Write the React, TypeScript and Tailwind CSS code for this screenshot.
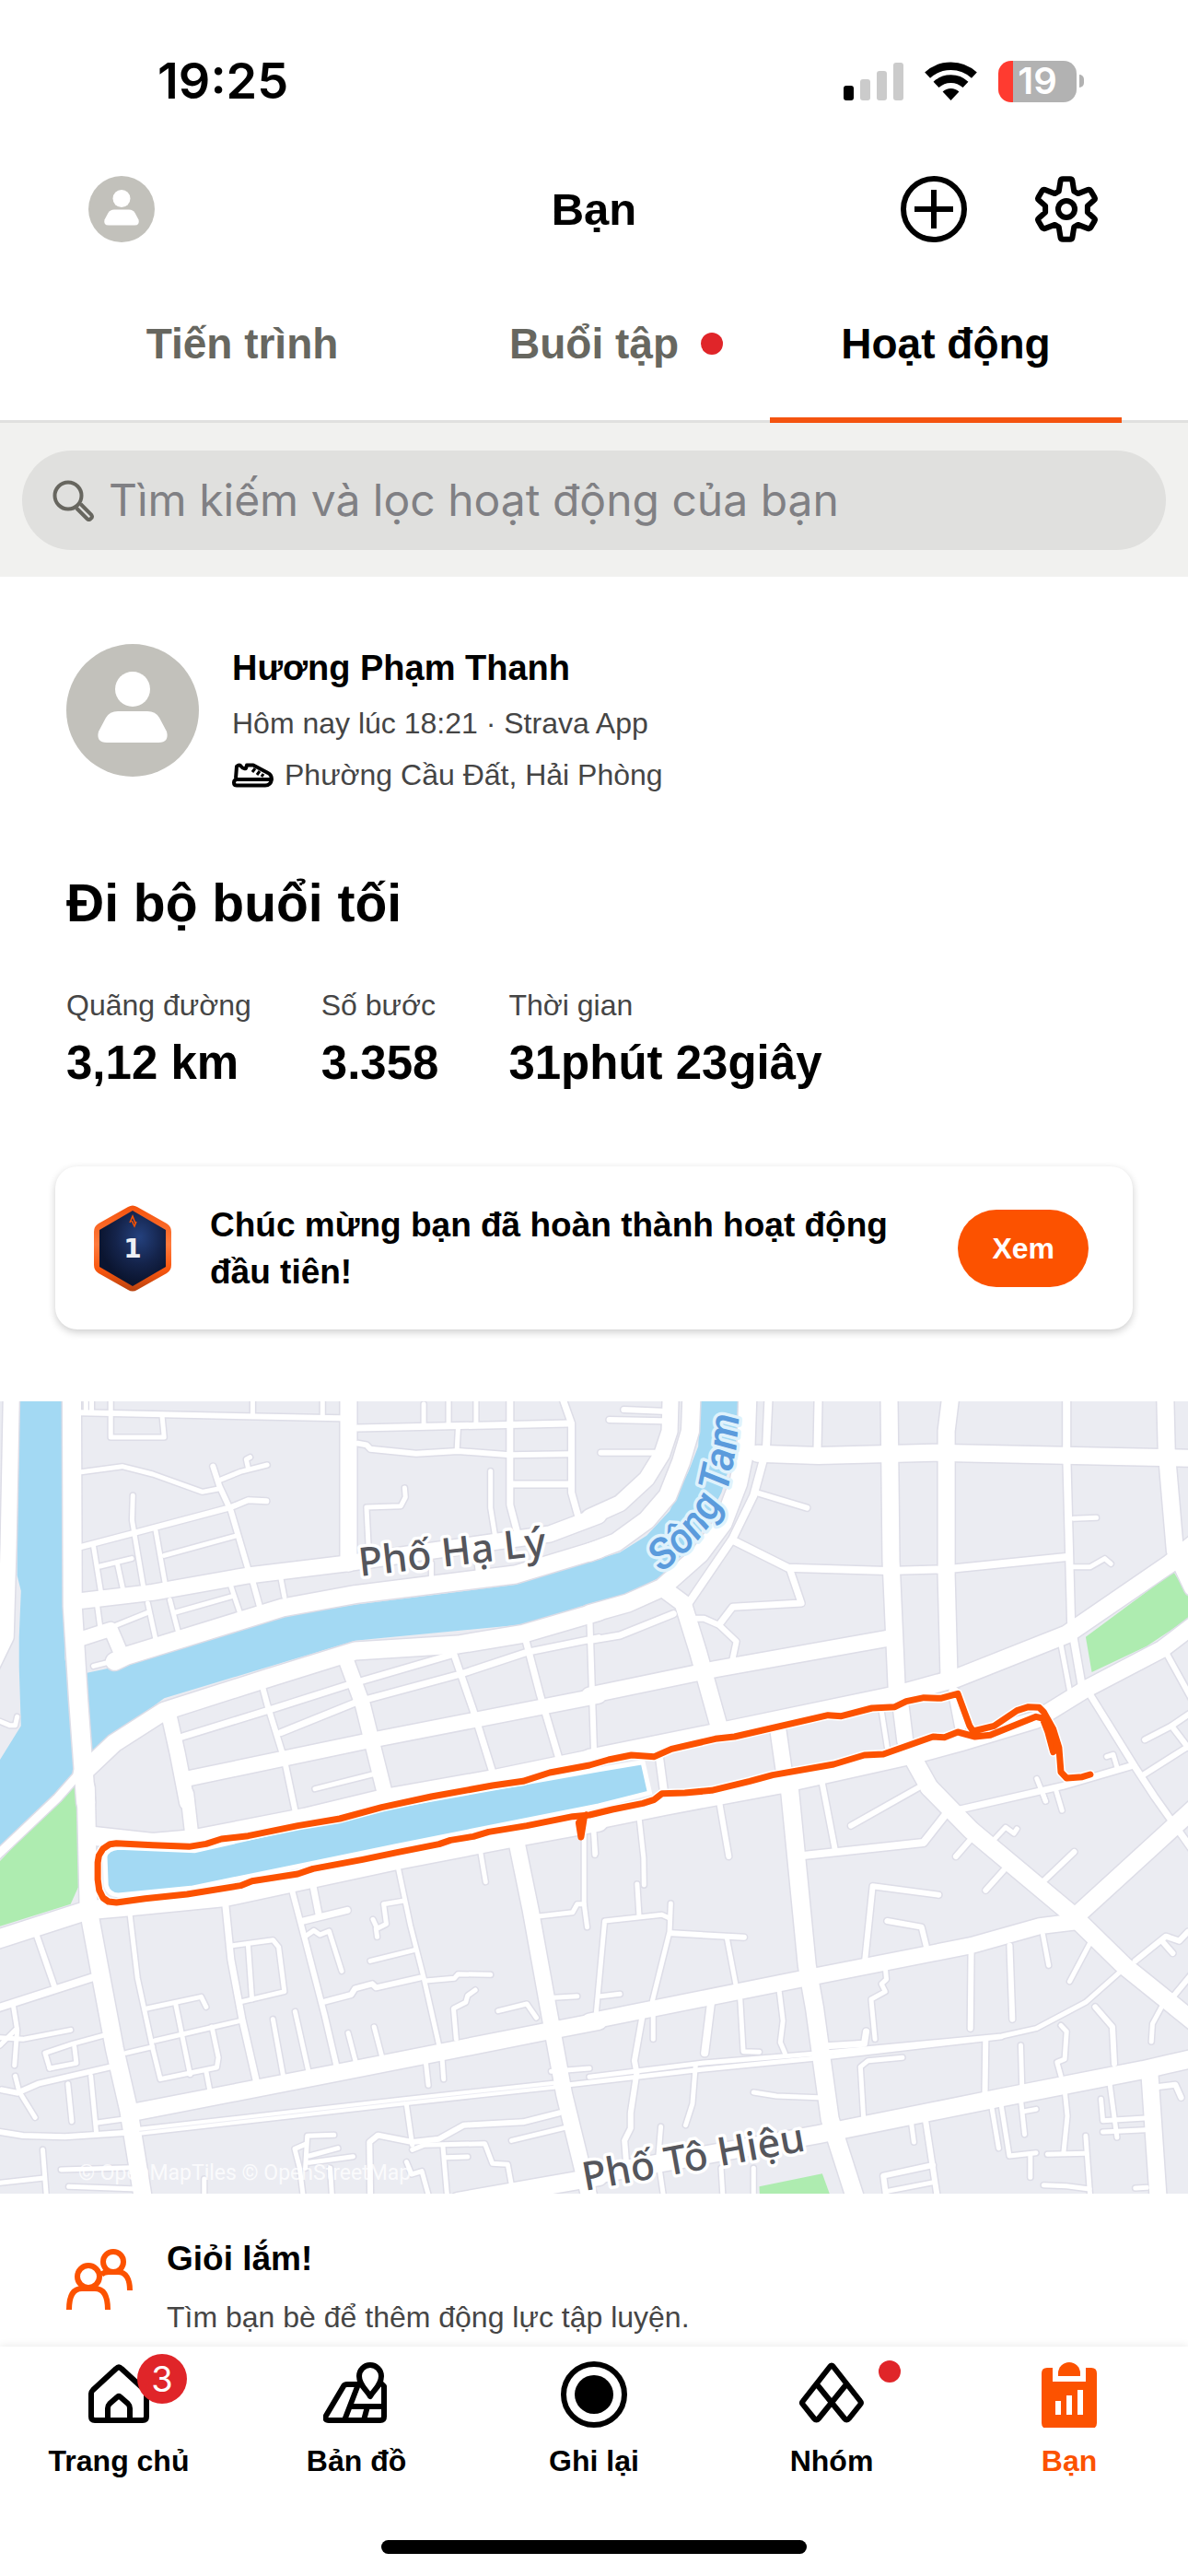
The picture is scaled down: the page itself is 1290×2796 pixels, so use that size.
import type { ReactNode } from "react";

type Road = [number, string];
type Sheet = { x: number; y: number; roads: Road[] };

const ACTIVE = "text-[#fc5200]";

// Street network, split into four survey sheets. Each entry is [width, points].
const sheets: Sheet[] = [
  {
    x: 0,
    y: 0,
    roads: [
      [20, "188,0 190,700 205,1000 222,1290 225,1340"],
      [17, "30,0 22,500 15,800 -20,890"],
      [5, "0,1075 25,1088 40,1088 45,1060"],
      [19, "300,880 330,862 740,705 930,662 1350,597 1568,515"],
      [17, "215,682 400,655 650,600 900,562 1100,525 1440,465 1568,405"],
      [18, "913,0 913,560"],
      [6, "212,70 890,88"],
      [5, "225,0 225,70"],
      [5, "240,0 240,70"],
      [5, "290,0 290,150 430,150 425,85"],
      [5, "662,0 662,75"],
      [5, "845,0 845,80"],
      [7, "937,120 1490,105"],
      [6, "937,170 960,175 970,188 1090,203 1200,195 1335,208 1490,205"],
      [5, "1110,42 1110,110"],
      [5, "1175,0 1175,108"],
      [5, "1247,0 1247,105"],
      [5, "1200,120 1197,190"],
      [7, "1336,0 1336,370 1355,460"],
      [7, "1467,0 1497,105 1497,330 1515,410"],
      [7, "1345,303 1490,303"],
      [5, "1285,260 1285,380 1298,480"],
      [5, "1060,315 1062,345 1050,374 960,378 965,500"],
      [5, "212,263 320,245 400,270 530,328 572,318"],
      [6, "558,245 575,310 605,390 650,580"],
      [5, "575,290 630,262 700,240"],
      [5, "650,250 645,222 655,215"],
      [6, "212,507 350,462 605,378 650,355 698,358"],
      [5, "348,340 346,420 376,640"],
      [5, "408,455 433,630"],
      [5, "430,535 615,472"],
      [5, "245,505 265,660"],
      [5, "262,570 345,545"],
      [5, "308,565 322,645"],
      [5, "255,700 262,765"],
      [15, "215,805 290,775 322,868"],
      [5, "305,762 385,722"],
      [5, "387,690 408,810"],
      [5, "445,680 468,790"],
      [5, "460,720 608,668"],
      [5, "605,635 628,720"],
      [6, "660,610 680,700"],
      [5, "735,605 745,670"],
      [5, "245,895 310,875"],
      [5, "1130,560 1130,610"],
      [5, "1250,560 1253,595"],
      [19, "215,1245 300,1145 430,1042 700,935 930,846 1200,825 1370,790 1568,718"],
      [16, "440,1040 465,1180 490,1340"],
      [16, "905,870 950,1020 1010,1320"],
      [16, "490,1262 970,1137 1568,992"],
      [6, "685,950 700,1020 745,1200 773,1365"],
      [7, "470,1128 700,1040 910,957 1150,870 1185,857"],
      [7, "735,1112 935,1012 1210,920 1380,850 1568,803"],
      [7, "1190,860 1240,1040 1290,1240"],
      [7, "1375,800 1415,990 1465,1200"],
      [6, "1545,750 1556,1170"],
      [5, "825,1295 975,1248"],
      [20, "240,1448 400,1470 510,1458 800,1388 1000,1328 1300,1262 1568,1193"],
      [9, "225,1220 150,1325 0,1502 -30,1540"],
    ],
  },
  {
    x: 1544,
    y: 0,
    roads: [
      [19, "0,525 70,492 150,420 205,340 240,230 264,130 268,0"],
      [17, "0,410 80,365 150,285 190,205 210,130 213,0"],
      [6, "90,60 190,65"],
      [6, "52,93 190,97"],
      [6, "30,200 175,200"],
      [19, "0,725 100,690 190,640 290,530 350,430 390,300 410,180 415,0"],
      [8, "470,0 463,190 430,340 375,480 260,690"],
      [18, "785,0 790,550 805,970"],
      [18, "948,0 935,130 935,600 942,930"],
      [18, "440,203 600,210 900,200 1568,218"],
      [8, "600,0 597,190"],
      [8, "1250,0 1250,200 1262,760 1290,960"],
      [18, "1508,0 1512,200 1534,520 1580,640"],
      [6, "445,333 570,380"],
      [8, "375,485 520,575 780,585 935,580 1250,540"],
      [7, "525,580 555,690 375,703 340,760"],
      [6, "270,740 300,740 340,762 385,815 372,890"],
      [5, "1268,415 1328,412"],
      [5, "1265,572 1312,572 1350,545 1366,562"],
      [18, "190,640 245,690 285,850 340,1095"],
      [7, "0,812 80,795 220,725"],
      [17, "0,990 330,905 780,805"],
      [19, "0,1195 330,1112 800,990 960,935 1250,792 1520,562 1600,480"],
      [5, "1235,825 1258,975"],
      [18, "500,1282 850,1185 970,1145 1170,1070 1300,970 1500,840 1600,745"],
      [5, "765,1040 780,1160"],
      [17, "815,1020 827,1140"],
      [12, "955,980 972,1090"],
      [17, "495,1110 510,1240"],
      [8, "183,1190 196,1310"],
      [19, "845,1190 890,1290"],
      [7, "1310,985 1430,1225 1480,1320 1600,1530"],
      [6, "1510,850 1590,1030"],
      [6, "1455,1135 1525,1090 1590,1035"],
      [6, "1525,1090 1568,1160"],
      [6, "1450,1250 1590,1140"],
      [5, "1355,1190 1372,1183 1382,1225"],
      [5, "1172,1262 1195,1335"],
    ],
  },
  {
    x: 0,
    y: 1290,
    roads: [
      [20, "-20,500 230,400 320,390 590,357 1040,237 1340,165 1568,113"],
      [19, "225,0 232,400 262,600 300,850 337,1050 375,1340"],
      [14, "490,20 502,150"],
      [5, "340,410 360,620 400,850 420,950 568,912 572,880 555,780"],
      [5, "385,720 527,682 540,715"],
      [5, "460,705 498,935"],
      [5, "330,865 400,845"],
      [5, "405,825 630,760"],
      [5, "540,925 550,990"],
      [7, "590,375 605,560 635,760 672,960"],
      [5, "610,515 715,497 730,520 745,665 635,697"],
      [5, "650,515 660,690"],
      [5, "715,755 742,940"],
      [5, "773,730 808,925"],
      [6, "765,335 800,500 850,740 882,910"],
      [7, "820,320 835,415"],
      [7, "795,435 910,400"],
      [5, "800,485 822,466 838,480 862,468 895,598"],
      [5, "1043,262 1075,450 1110,620 1150,840"],
      [5, "1055,370 1005,380 1012,445 988,460 977,430"],
      [5, "985,460 988,487"],
      [5, "970,565 1085,530"],
      [6, "850,698 920,675 930,655 975,640 985,652 1100,620"],
      [5, "1115,630 1190,622 1200,608 1285,610"],
      [5, "1195,820 1188,720 1220,700 1225,678 1245,660"],
      [5, "1305,728 1380,705 1405,750"],
      [5, "912,800 932,895"],
      [5, "980,780 1000,875"],
      [5, "1258,205 1272,308"],
      [17, "1352,170 1390,400 1438,730 1478,1000 1545,1340"],
      [18, "350,1058 880,930 1430,795 1568,762"],
      [9, "365,1120 1060,1022 1450,970"],
      [5, "1410,420 1500,407 1512,380 1530,380"],
      [5, "1530,150 1530,380 1538,455"],
      [5, "1555,130 1560,215"],
      [5, "1450,685 1512,680"],
      [8, "-10,720 245,618"],
      [6, "97,485 143,650"],
      [5, "35,712 45,790 38,905"],
      [5, "0,840 40,790"],
      [5, "0,815 60,820 185,790"],
      [5, "130,915 118,865 190,835 270,808"],
      [5, "195,845 200,898 130,915"],
      [6, "5,985 45,995 100,965 290,910"],
      [5, "40,940 50,990 92,1075"],
      [5, "178,965 188,1088"],
      [5, "238,940 252,1120"],
      [5, "255,1092 325,1080"],
      [6, "-10,1120 60,1134 170,1138 325,1125"],
      [5, "112,1180 122,1340"],
      [5, "0,1288 115,1272"],
      [5, "160,1245 345,1238"],
      [5, "180,1300 360,1308"],
      [5, "535,1275 535,1340"],
      [5, "1115,890 1122,970"],
      [5, "1158,880 1162,950"],
      [5, "1065,1035 1080,1165"],
      [6, "970,1322 968,1155 990,1133 1080,1155 1150,1145 1215,1100 1370,1090 1465,1060"],
      [5, "1340,1150 1480,1108"],
      [5, "1080,1180 1110,1165 1270,1160 1290,1225 1330,1228 1342,1310"],
      [5, "1160,1165 1165,1240 1172,1340"],
      [5, "1165,1205 1225,1203"],
      [5, "875,1132 805,1135 800,1240"],
      [5, "800,1162 772,1177 785,1240 795,1340"],
      [5, "810,1200 885,1175"],
      [5, "810,1222 925,1202"],
      [5, "1065,1220 1078,1260 1105,1250 1125,1340"],
      [5, "865,1240 870,1340"],
      [19, "1200,1348 1568,1268"],
    ],
  },
  {
    x: 1544,
    y: 1290,
    roads: [
      [18, "0,112 200,62 500,-8"],
      [19, "524,0 570,580 590,720 630,1080 697,1340"],
      [17, "0,762 550,625 1000,515 1180,452 1270,438"],
      [19, "890,0 1000,140 1260,410 1400,580 1600,780"],
      [19, "1265,430 1600,50"],
      [5, "0,943 300,897 600,866 1080,810 1170,785 1300,700 1400,590"],
      [5, "-100,975 300,918 600,881 1080,812"],
      [5, "-100,925 0,915"],
      [6, "340,45 365,225"],
      [5, "130,95 142,230 143,318"],
      [5, "125,315 130,415"],
      [5, "10,120 14,220"],
      [5, "18,730 40,435 190,415 208,425"],
      [5, "213,378 210,470 165,695"],
      [6, "215,475 405,488"],
      [5, "360,490 383,640"],
      [5, "30,680 80,673"],
      [6, "138,750 118,890 124,930 108,1060 108,1110 92,1150 97,1230"],
      [5, "167,745 167,820"],
      [8, "318,705 302,865"],
      [5, "395,690 403,860 445,862"],
      [5, "497,660 507,760 500,830 512,865"],
      [5, "278,905 270,1030 252,1100"],
      [5, "430,993 490,1005 600,1010"],
      [6, "608,-25 643,200"],
      [6, "685,125 880,-12"],
      [8, "560,222 875,180 932,90"],
      [6, "722,560 742,322 915,350"],
      [6, "780,435 870,455 882,515"],
      [7, "960,75 1240,-5 1420,-70"],
      [5, "1185,10 1195,45"],
      [5, "1220,0 1238,75"],
      [6, "960,225 995,175"],
      [5, "1060,170 1090,130 1112,150 1120,135"],
      [6, "1038,335 1085,270"],
      [6, "1190,305 1270,210"],
      [5, "775,585 778,625 765,640 775,665 738,690 748,820"],
      [5, "718,1075 710,910 730,890 820,880"],
      [7, "620,842 720,835 725,795"],
      [6, "1000,540 998,785"],
      [6, "1101,515 1108,755"],
      [5, "1188,480 1203,580"],
      [5, "1310,510 1258,632"],
      [6, "1430,565 1510,485 1545,500 1568,470"],
      [6, "1503,505 1528,540"],
      [6, "1530,680 1590,590"],
      [5, "1500,712 1475,770 1472,828"],
      [6, "1325,715 1370,780 1375,900"],
      [5, "1235,775 1250,795 1245,885 1225,895 1235,940"],
      [5, "1130,840 1133,970"],
      [6, "1038,820 1036,995"],
      [19, "0,1265 600,1130 1080,1010 1450,920 1590,880"],
      [18, "1467,920 1490,1340"],
      [6, "1490,975 1535,968 1550,1010"],
      [5, "1362,955 1382,1140"],
      [5, "1340,1015 1345,1085 1455,1077"],
      [5, "1345,1122 1455,1115"],
      [5, "1245,985 1252,1070 1242,1190"],
      [5, "1200,1195 1300,1192"],
      [5, "1300,1135 1312,1340"],
      [5, "1130,1015 1140,1130"],
      [5, "1140,1055 1170,1048"],
      [5, "1078,1030 1100,1200 1170,1190"],
      [5, "1155,1195 1155,1270"],
      [5, "1053,1035 1072,1175"],
      [5, "843,1090 850,1155"],
      [6, "880,1080 912,1340"],
      [6, "900,1230 770,1265 778,1340"],
      [5, "780,1315 905,1285"],
      [5, "1190,1295 1250,1298 1310,1308"],
      [5, "1430,1305 1460,1303"],
      [5, "187,1105 180,1210 195,1340"],
      [5, "345,1240 350,1340"],
      [5, "430,1240 430,1340"],
    ],
  },
];

const water = [
  "45,0 170,0 170,870 215,1235 215,1290 0,1510 0,1200 55,1090 50,900 50,800 55,650 45,600",
  "225,918 330,890 730,735 930,695 1350,630 1544,556 1624,525 1694,470 1754,390 1804,260 1829,180 1836,0 1938,0 1927,180 1890,330 1824,490 1724,610 1644,660 1544,692 1370,760 930,812 430,1000 240,1175",
];

const canal =
  "M275 1515 Q280 1490 310 1486 L510 1496 L1000 1358 L1568 1232 L1684 1208 L1702 1308 L1568 1350 L1040 1480 L800 1542 L500 1618 L310 1641 Q285 1640 278 1610 Z";

const parks = [
  "205,1260 205,1615 185,1670 0,1742 0,1530",
  "3074,588 3120,680 3120,735 3004,830 2860,915 2844,800",
  "1989,2590 2154,2548 2175,2620 1990,2620",
];

const route =
  "2856,1248 2835,1256 2794,1260 2779,1240 2774,1160 2759,1100 2734,1045 2722,1030 2694,1028 2664,1040 2604,1090 2549,1107 2540,1090 2509,985 2464,1000 2420,998 2374,1010 2344,1028 2284,1032 2204,1058 2169,1055 1924,1125 1874,1132 1759,1165 1714,1190 1654,1185 1594,1200 1544,1218 1440,1242 1370,1270 1290,1284 1130,1320 1000,1355 890,1392 780,1415 650,1448 580,1458 540,1474 495,1483 400,1478 305,1472 288,1475 270,1490 259,1512 256,1535 256,1590 260,1625 270,1650 284,1662 305,1665 380,1652 490,1638 630,1610 660,1595 780,1572 820,1555 950,1525 1040,1502 1150,1475 1180,1462 1240,1450 1280,1435 1380,1415 1500,1385 1544,1380 1604,1362 1684,1342 1714,1330 1734,1310 1794,1308 1864,1300 1964,1270 2024,1250 2184,1215 2264,1185 2314,1182 2444,1125 2474,1127 2509,1110 2554,1125 2594,1120 2714,1060 2731,1065 2745,1110 2759,1175";

const RoadLayer = ({ color, grow }: { color: string; grow: number }) => (
  <g fill="none" stroke={color} strokeLinecap="round" strokeLinejoin="round">
    {sheets.map((sheet) => (
      <g key={`${sheet.x}-${sheet.y}`} transform={`translate(${sheet.x} ${sheet.y})`}>
        {sheet.roads.map(([width, points]) => (
          <polyline
            key={points}
            points={points}
            strokeWidth={width + grow}
            vectorEffect="non-scaling-stroke"
          />
        ))}
      </g>
    ))}
  </g>
);

const RouteMap = () => (
  <div className="relative aspect-[3/2] w-full overflow-hidden bg-[#ebecf2]">
    <svg
      className="h-full w-full"
      viewBox="0 33 3112 2580"
      preserveAspectRatio="none"
      role="img"
      aria-label="Bản đồ lộ trình"
    >
      {water.map((points) => (
        <polygon key={points} points={points} fill="#a3d9f3" />
      ))}
      {parks.map((points) => (
        <polygon key={points} points={points} fill="#aeecb0" />
      ))}
      <RoadLayer color="#dddde7" grow={3} />
      <RoadLayer color="#ffffff" grow={0} />
      <path
        d="M365 2410 L1060 2312 L1450 2260"
        fill="none"
        stroke="#ececf3"
        strokeWidth="1"
        vectorEffect="non-scaling-stroke"
      />
      <path
        d={canal}
        fill="#a3d9f3"
        stroke="#fff"
        strokeWidth="5"
        vectorEffect="non-scaling-stroke"
      />
      <g fill="none" strokeLinecap="round" strokeLinejoin="round">
        <g stroke="#fff" strokeWidth="10">
          <polyline points={route} vectorEffect="non-scaling-stroke" />
        </g>
        <g stroke="#fc5200" strokeWidth="7">
          <polyline points={route} vectorEffect="non-scaling-stroke" />
          <polyline
            points="1536,1380 1516,1405 1522,1452 1530,1390"
            vectorEffect="non-scaling-stroke"
          />
          <polyline
            points="2738,1075 2752,1090 2764,1130 2768,1165"
            vectorEffect="non-scaling-stroke"
          />
        </g>
      </g>
    </svg>
    <svg className="absolute inset-0 h-full w-full" viewBox="0 0 1290 860" aria-hidden="true">
      <defs>
        <path id="river-line" d="M718 186 C754 160 784 126 792 88 C800 52 803 30 803 -30" />
      </defs>
      <g
        className="font-['Noto_Sans',sans-serif] font-medium"
        fontSize="43"
        paintOrder="stroke"
        stroke="#fff"
        strokeWidth="7"
        strokeLinejoin="round"
      >
        <text fill="#55565c" transform="translate(391 190) rotate(-6.5)">
          Phố Hạ Lý
        </text>
        <text fill="#55565c" transform="translate(635 857) rotate(-10.3)">
          Phố Tô Hiệu
        </text>
        <text
          className="font-['Roboto',sans-serif]"
          fontSize="46"
          fill="#5b9bdc"
          stroke="#dff2fc"
          fontStyle="italic"
        >
          <textPath href="#river-line">Sông Tam</textPath>
        </text>
      </g>
      <text
        x="85"
        y="845"
        fontSize="23"
        fill="#fff"
        fillOpacity="0.8"
        className="font-['Roboto',sans-serif]"
      >
        © OpenMapTiles © OpenStreetMap
      </text>
    </svg>
  </div>
);

const Avatar = ({ className }: { className: string }) => (
  <svg className={className} viewBox="0 0 144 144" aria-hidden="true">
    <circle cx="72" cy="72" r="72" fill="#c2c1bb" />
    <circle cx="72" cy="49" r="19" fill="#fff" />
    <path
      d="M56 73H88Q97 73 101 80L109 95Q112 107 100 107H44Q32 107 35 95L43 80Q47 73 56 73Z"
      fill="#fff"
    />
  </svg>
);

const StatusBar = () => (
  <div className="flex h-44 items-center justify-between pl-[171px] pr-[113px]">
    <span className="font-['Inter',sans-serif] text-[54px] leading-none font-semibold">19:25</span>
    <div className="flex items-center gap-[23px]">
      <svg className="h-[41px] w-[65px]" viewBox="0 0 65 41" aria-hidden="true">
        <rect x="0" y="25" width="11" height="16" rx="3" />
        <rect x="18" y="18" width="11" height="23" rx="3" fill="#cbcbcb" />
        <rect x="36" y="9" width="11" height="32" rx="3" fill="#cbcbcb" />
        <rect x="54" y="0" width="11" height="41" rx="3" fill="#cbcbcb" />
      </svg>
      <svg className="h-[42px] w-[57px]" viewBox="0 0 57 42" aria-hidden="true">
        <g fill="none" stroke="#000" strokeWidth="8.6">
          <path d="M3.1 14.7A37.3 37.3 0 0 1 53.9 14.7" />
          <path d="M12.5 24.9A23.4 23.4 0 0 1 44.5 24.9" />
        </g>
        <path d="M28.5 42L19.6 32.5A13 13 0 0 1 37.4 32.5Z" />
      </svg>
      <div className="flex items-center gap-[3px]">
        <div className="flex h-[45px] w-[85px] items-center justify-center rounded-[14px] bg-[linear-gradient(90deg,#ff3b30_16px,#b2b2b2_16px)] font-['Inter',sans-serif] text-[40px] leading-none font-semibold text-white">
          19
        </div>
        <div className="h-[14px] w-[5px] rounded-r-full bg-[#b2b2b2]" />
      </div>
    </div>
  </div>
);

const Header = () => (
  <header className="grid h-[102px] grid-cols-[1fr_auto_1fr] items-center px-24">
    <button type="button" aria-label="Hồ sơ" className="justify-self-start">
      <Avatar className="size-[72px]" />
    </button>
    <h1 className="text-[49px] leading-none font-bold">Bạn</h1>
    <div className="flex gap-18 justify-self-end">
      <button type="button" aria-label="Thêm">
        <svg className="size-[72px]" viewBox="0 0 72 72" fill="none" stroke="#000" strokeWidth="6">
          <circle cx="36" cy="36" r="33" />
          <path d="M36 15V57M15 36H57" />
        </svg>
      </button>
      <button type="button" aria-label="Cài đặt">
        <svg
          className="size-[72px]"
          viewBox="0 0 72 72"
          fill="none"
          stroke="#000"
          strokeWidth="6"
          strokeLinejoin="round"
        >
          <path d="M27.7 16.7L29.6 5Q30 3.3 32 3.3H40Q42 3.3 42.4 5L44.3 16.7L48.6 19.1L59.6 14.9Q61.5 14.4 62.5 16.2L66.6 23.3Q67.5 25 66 26.2L58.9 32.5V39.5L66 45.8Q67.5 47 66.6 48.7L62.5 55.8Q61.5 57.6 59.6 57.1L48.6 52.9L44.3 55.3L42.4 67Q42 68.7 40 68.7H32Q30 68.7 29.6 67L27.7 55.3L23.4 52.9L12.4 57.1Q10.5 57.6 9.5 55.8L5.4 48.7Q4.5 47 6 45.8L13.1 39.5V32.5L6 26.2Q4.5 25 5.4 23.3L9.5 16.2Q10.5 14.4 12.4 14.9L23.4 19.1Z" />
          <circle cx="36" cy="36" r="9" />
        </svg>
      </button>
    </div>
  </header>
);

const Tabs = () => (
  <nav className="grid h-[181px] grid-cols-3 border-b-[3px] border-[#e0e0df] px-18 text-[46px] leading-[56px] font-bold text-[#676760]">
    <a href="#progress" className="flex items-center justify-center pt-3">
      Tiến trình
    </a>
    <a href="#workouts" className="flex items-center justify-center pt-3">
      <span className="relative">
        Buổi tập
        <span className="absolute top-4 left-full ml-6 size-6 rounded-full bg-[#e02529]" />
      </span>
    </a>
    <a
      href="#activities"
      aria-current="page"
      className="-mb-[3px] flex items-center justify-center border-b-6 border-[#f4530f] pt-3.5 text-black"
    >
      Hoạt động
    </a>
  </nav>
);

const Search = () => (
  <div className="bg-[#f1f1ef] px-6 pt-[30px] pb-[29px]">
    <label className="flex h-[108px] items-center gap-4 rounded-[54px] bg-[#e0e0de] pl-[33px]">
      <svg
        className="size-[45px] shrink-0"
        viewBox="0 0 45 45"
        fill="none"
        stroke="#67665f"
        strokeWidth="4"
        aria-hidden="true"
      >
        <circle cx="17" cy="17" r="14.5" />
        <path d="M26 30.500L37.500 42Q39.500 44 41.500 42Q44 40 42 37.500L30.500 26" />
      </svg>
      <input
        type="search"
        aria-label="Tìm kiếm"
        placeholder="Tìm kiếm và lọc hoạt động của bạn"
        className="min-w-0 flex-1 bg-transparent font-['Inter',sans-serif] text-[48px] leading-[60px] outline-none placeholder:text-[#808084]"
      />
    </label>
  </div>
);

const stats = [
  { label: "Quãng đường", value: "3,12 km" },
  { label: "Số bước", value: "3.358" },
  { label: "Thời gian", value: "31phút 23giây" },
];

const Badge = () => (
  <svg className="h-[94px] w-[84px] shrink-0" viewBox="0 0 84 94" aria-hidden="true">
    <defs>
      <linearGradient id="rim" x1="0" y1="0" x2="0" y2="1">
        <stop offset="0" stopColor="#f4520c" />
        <stop offset="0.45" stopColor="#ff7a3c" />
        <stop offset="0.75" stopColor="#f9560e" />
        <stop offset="1" stopColor="#b84310" />
      </linearGradient>
      <radialGradient id="core" cx="0.6" cy="0.35" r="0.6">
        <stop offset="0" stopColor="#24417e" />
        <stop offset="0.6" stopColor="#14234a" />
        <stop offset="1" stopColor="#0b1530" />
      </radialGradient>
    </defs>
    <path
      d="M37 2Q42 -1 47 2L79 20Q84 23 84 29V65Q84 71 79 74L47 92Q42 95 37 92L5 74Q0 71 0 65V29Q0 23 5 20Z"
      fill="url(#rim)"
    />
    <path d="M42 6L78 27V67L42 88L6 67V27Z" fill="url(#core)" />
    <path d="M39 19L42 12L45 20M41 17L44 23L46 18" fill="none" stroke="#fc5200" strokeWidth="1.5" />
    <text
      x="42"
      y="57"
      textAnchor="middle"
      fontSize="28"
      className="font-['DejaVu_Sans',sans-serif] font-bold"
      fill="#eef0f4"
    >
      1
    </text>
  </svg>
);

const Activity = () => (
  <article className="pt-[73px]">
    <div className="px-18">
      <div className="flex items-start gap-9">
        <Avatar className="size-36 shrink-0" />
        <div className="text-[32px] leading-[56px] text-[#454545]">
          <h2 className="mb-1.5 text-[38px] leading-[52px] font-bold text-black">
            Hương Phạm Thanh
          </h2>
          <p>Hôm nay lúc 18:21 · Strava App</p>
          <p className="flex items-center gap-3">
            <svg
              className="h-[27px] w-[45px]"
              viewBox="0 0 45 27"
              fill="none"
              stroke="#000"
              strokeWidth="4"
              strokeLinejoin="round"
              aria-hidden="true"
            >
              <path d="M4 17L5 4Q8 1 10 4Q12 7 15 6L16 2.500H23L39 11Q43 13 43 18Q42 24.500 36 24.500H5Q2 24.500 2 21.500Q2 18.500 5 18H41" />
              <path d="M22 10L25 6M27 13L30 9M32 15L34 12" strokeWidth="3" />
            </svg>
            Phường Cầu Đất, Hải Phòng
          </p>
        </div>
      </div>
      <h3 className="mt-[75px] text-[57px] leading-[72px] font-bold">Đi bộ buổi tối</h3>
      <dl className="mt-[55px] flex gap-[76px]">
        {stats.map((stat) => (
          <div key={stat.label}>
            <dt className="text-[32px] leading-10 text-[#454545]">{stat.label}</dt>
            <dd className="mt-[15px] text-[51px] leading-[56px] font-bold">{stat.value}</dd>
          </div>
        ))}
      </dl>
    </div>
    <div className="mx-[60px] mt-[84px] mb-[78px] flex h-[177px] items-center rounded-3xl bg-white pr-12 pl-[42px] shadow-[0_3px_8px_rgba(0,0,0,0.2)]">
      <Badge />
      <p className="ml-[42px] flex-1 pr-12 text-[37px] leading-[51px] font-bold">
        Chúc mừng bạn đã hoàn thành hoạt động đầu tiên!
      </p>
      <button
        type="button"
        className="h-[84px] rounded-[42px] bg-[#fc5200] px-[37px] text-[32px] font-bold text-white"
      >
        Xem
      </button>
    </div>
    <RouteMap />
  </article>
);

const FriendsPrompt = () => (
  <section className="flex items-start gap-9 px-18 pt-[47px] pb-3">
    <svg
      className="mt-[13px] h-[66px] w-[73px]"
      viewBox="0 0 73 66"
      fill="none"
      stroke="#fc5200"
      strokeWidth="6"
      aria-hidden="true"
    >
      <circle cx="24" cy="30" r="12" />
      <path d="M3 66C3 50 8 43 17 43H31C40 43 45 50 45 66" />
      <circle cx="51" cy="14" r="11" />
      <path d="M38 28Q41 25 46 25H56C65 25 69 33 69 45" />
    </svg>
    <div>
      <h2 className="text-[37px] leading-[48px] font-bold">Giỏi lắm!</h2>
      <p className="mt-[19px] text-[32px] leading-10 text-[#454545]">
        Tìm bạn bè để thêm động lực tập luyện.
      </p>
    </div>
  </section>
);

const NavIcon = ({ children }: { children: ReactNode }) => (
  <svg
    className="size-[72px]"
    viewBox="0 0 72 72"
    fill="none"
    stroke="currentColor"
    strokeWidth="6"
    strokeLinejoin="round"
    aria-hidden="true"
  >
    {children}
  </svg>
);

const navItems = [
  {
    label: "Trang chủ",
    href: "#home",
    icon: (
      <>
        <path d="M6 35Q6 33 8 31L33 8Q36 5 39 8L64 31Q66 33 66 35V60Q66 64 62 64H10Q6 64 6 60Z" />
        <path d="M24 64V51Q24 48 26 46L34 39Q36 37 38 39L46 46Q48 48 48 51V64" />
      </>
    ),
    badge: (
      <span className="absolute -top-2 left-14 flex size-[54px] items-center justify-center rounded-full bg-[#e02529] font-['Inter',sans-serif] text-[38px] leading-none font-normal text-white">
        3
      </span>
    ),
  },
  {
    label: "Bản đồ",
    href: "#maps",
    icon: (
      <>
        <path d="M39 25H26Q23 25 22 27L3 59Q1 64 6 64H62Q66 64 66 60V27L62 23" />
        <path d="M38 25L23 64M30 49H66M48 49L44 64" />
        <path d="M51 38C47 31 39 26 39 16A12 12 0 0 1 63 16C63 26 55 31 51 38Z" />
      </>
    ),
  },
  {
    label: "Ghi lại",
    href: "#record",
    icon: (
      <>
        <circle cx="36" cy="36" r="33" />
        <circle cx="36" cy="36" r="21" fill="currentColor" stroke="none" />
      </>
    ),
  },
  {
    label: "Nhóm",
    href: "#groups",
    icon: (
      <path d="M34 6Q36 3 38 6L67 43Q69 45 67 47L55 62Q52.500 65 50 62L20 25M52 25L22 62Q19.500 65 17 62L5 47Q3 45 5 43L34 6" />
    ),
    badge: (
      <span className="absolute -top-px left-[87px] size-6 rounded-full bg-[#e02529]" />
    ),
  },
  {
    label: "Bạn",
    href: "#you",
    active: true,
    icon: (
      <g fill="currentColor" stroke="none">
        <path
          fillRule="evenodd"
          d="M12 7H18V22H54V7H60Q66 7 66 13V67Q66 73 60 73H12Q6 73 6 67V13Q6 7 12 7ZM21 43V58H27V43ZM33 37V58H39V37ZM45 31V58H51V31Z"
        />
        <path d="M24 16V13A12 12 0 0 1 48 13V16Z" />
      </g>
    ),
  },
];

const BottomNav = () => (
  <div className="relative bg-white pt-4 pb-6 shadow-[0_-2px_8px_rgba(0,0,0,0.07)]">
    <nav className="grid grid-cols-5">
      {navItems.map((item) => (
        <a
          key={item.href}
          href={item.href}
          aria-current={item.active ? "page" : undefined}
          className={`flex flex-col items-center gap-4 text-[32px] leading-10 font-bold ${item.active ? ACTIVE : "text-black"}`}
        >
          <span className="relative">
            <NavIcon>{item.icon}</NavIcon>
            {item.badge}
          </span>
          {item.label}
        </a>
      ))}
    </nav>
    <div className="mx-auto mt-[66px] h-[15px] w-[462px] rounded-full bg-black" />
  </div>
);

const App = () => (
  <main className="w-full overflow-hidden bg-white font-['Liberation_Sans',Arial,sans-serif] text-black">
    <StatusBar />
    <Header />
    <Tabs />
    <Search />
    <Activity />
    <FriendsPrompt />
    <BottomNav />
  </main>
);

export default App;
